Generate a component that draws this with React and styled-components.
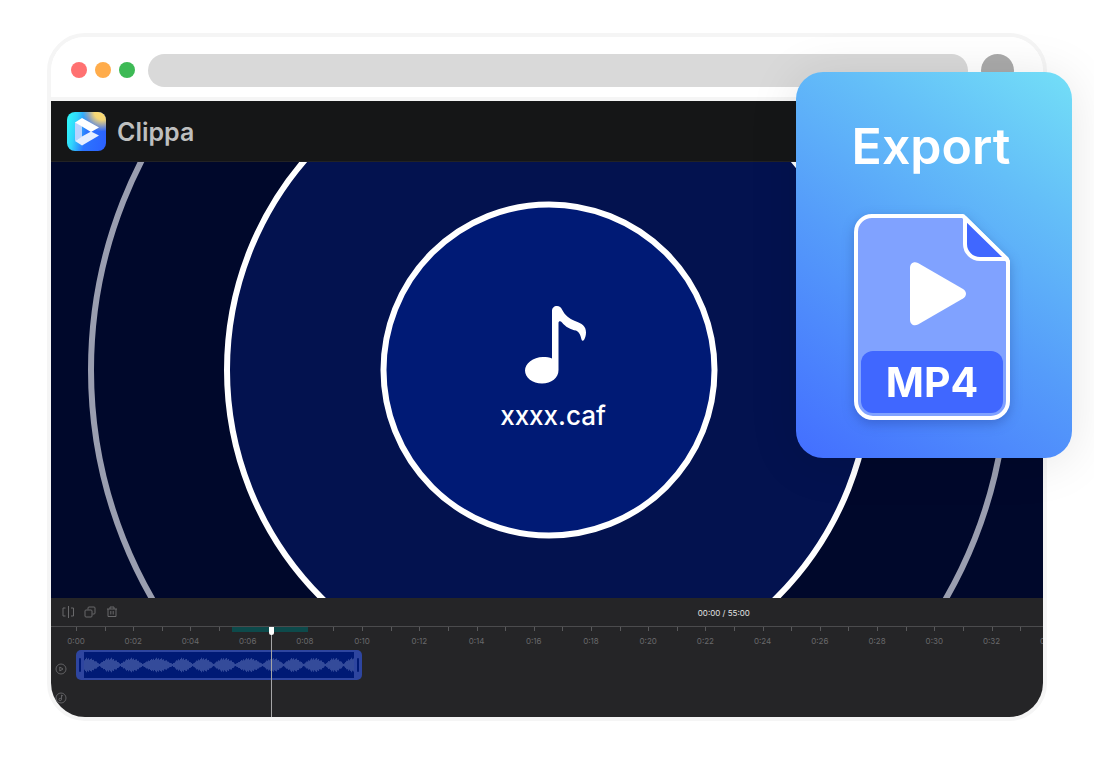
import React from 'react';
import styled, { createGlobalStyle } from 'styled-components';

const VISIBLE_SECONDS = 33.8;
const GUTTER = 25;

const GlobalStyle = createGlobalStyle`
  *, *::before, *::after {
    box-sizing: border-box;
  }
  body {
    margin: 0;
    background: #fff;
    font-family: Inter, "Open Sans", sans-serif;
  }
  button, input {
    margin: 0;
    padding: 0;
    border: 0;
    background: none;
    font: inherit;
    color: inherit;
  }
  svg {
    display: block;
  }
`;

const Page = styled.main`
  position: relative;
  padding: 33px 47px 43px;
`;

const Window = styled.section`
  overflow: hidden;
  border: 4px solid #f5f5f5;
  border-radius: 38px;
  background: #fff;
`;

const TitleBar = styled.header`
  display: flex;
  align-items: center;
  gap: 13px;
  height: 64px;
  padding: 6px 29px 0 20px;
  border-bottom: 4px solid #f5f5f5;
  background: #fff;
`;
const Lights = styled.div`
  display: flex;
  gap: 8px;
`;
const Light = styled.button`
  width: 16px;
  height: 16px;
  border-radius: 50%;
  background: ${({color}) => color};
`;
const Address = styled.input`
  flex: 1;
  min-width: 0;
  height: 33px;
  padding: 0 16px;
  border-radius: 17px;
  background: #d9d9d9;
`;
const Avatar = styled.button`
  width: 33px;
  height: 33px;
  border-radius: 50%;
  background: #aaa;
`;

const AppBar = styled.div`
  display: flex;
  align-items: center;
  gap: 11px;
  height: 61px;
  padding: 1px 16px 0;
  border-bottom: 1px solid #222224;
  background: #151617;
`;
const AppName = styled.h1`
  margin: 0;
  font-size: 25px;
  line-height: 32px;
  font-weight: 600;
  color: #bebfbf;
`;

const Stage = styled.div`
  display: grid;
  height: 436px;
  overflow: hidden;
  background: #00082b;

  > * {
    grid-area: 1 / 1;
  }
`;
const Rings = styled.svg`
  width: 100%;
  height: 436px;
`;
const Track = styled.div`
  display: flex;
  flex-direction: column;
  align-items: center;
  gap: 16px;
  padding: 144px 0 0 18px;
`;
const TrackName = styled.p`
  margin: 0;
  padding-right: 6px;
  font-size: 26px;
  line-height: 32px;
  font-weight: 500;
  color: #fff;
`;

const Timeline = styled.div`
  background: #252527;
  color: #69696b;
`;
const Tools = styled.div`
  display: grid;
  grid-template-columns: 13fr 7fr;
  align-items: center;
  height: 28px;
`;
const ToolGroup = styled.div`
  display: flex;
  gap: 10px;
  padding-left: 11px;
`;
const ToolButton = styled.button`
  width: 12px;
  height: 12px;
`;
const Clock = styled.span`
  padding: 2px 0 0 2px;
  font-size: 8px;
  line-height: 12px;
  color: #e2e2e3;
`;

const Lanes = styled.div`
  display: grid;
  grid-template-columns: ${GUTTER}px 1fr;
  height: 91px;
  border-top: 1px solid #4b4b4d;
`;
const Gutter = styled.div`
  display: flex;
  flex-direction: column;
  gap: 17px;
  padding: 36px 0 0 4px;
`;
const Area = styled.div`
  position: relative;
  min-width: 0;
`;
const Ruler = styled.ol`
  display: flex;
  height: 23px;
  margin: 0;
  padding: 0;
  list-style: none;
`;
const Second = styled.li`
  flex: none;
  width: calc(100% / ${VISIBLE_SECONDS});

  &::before {
    content: '';
    display: block;
    width: 1px;
    height: 4px;
    background: #59595b;
  }
`;
const SecondLabel = styled.span`
  display: flex;
  justify-content: center;
  width: 0;
  margin-top: 4px;
  font-size: 8px;
  line-height: 12px;
`;
const Range = styled.div`
  position: absolute;
  top: 0;
  height: 5px;
  background: #0d4a4b;
`;
const Clip = styled.div`
  display: grid;
  grid-template-columns: 8px 1fr 8px;
  align-items: center;
  height: 30px;
  border-radius: 5px;
  background: #2e459f;
`;
const Grip = styled.button`
  justify-self: center;
  width: 2px;
  height: 14px;
  border-radius: 1px;
  background: #001a75;
`;
const Wave = styled.svg`
  width: 100%;
  height: 26px;
  background: #001a75;
`;
const Playhead = styled.div`
  position: absolute;
  top: 0;
  width: 5px;
  height: 90px;
  margin-left: -2px;
  background: linear-gradient(#a5a5a6, #a5a5a6) center / 1px 100% no-repeat;

  &::before {
    content: '';
    display: block;
    height: 8px;
    border-radius: 0 0 3px 3px;
    background: #fff;
  }
`;

const ExportCard = styled.aside`
  position: absolute;
  top: 72px;
  right: 22px;
  display: flex;
  flex-direction: column;
  align-items: center;
  gap: 36px;
  width: 276px;
  height: 386px;
  padding: 42px 4px 0 0;
  border-radius: 27px;
  background: linear-gradient(34deg, #436eff 0%, #559cfa 44%, #64bff8 74%, #73dff7 100%);
  box-shadow: 0 4px 50px rgba(0, 0, 0, 0.1);
`;
const ExportTitle = styled.h2`
  margin: 0;
  padding-right: 2px;
  font-size: 50px;
  line-height: 64px;
  font-weight: 600;
  color: #fff;
`;
const File = styled.div`
  display: grid;
  filter: drop-shadow(0 4px 6px rgba(20, 40, 120, 0.3));

  > * {
    grid-area: 1 / 1;
  }
`;
const Format = styled.span`
  align-self: end;
  margin: 0 7px 7px;
  border-radius: 12px;
  background: #4067ff;
  font-size: 41px;
  line-height: 62px;
  font-weight: 700;
  text-align: center;
  color: #fff;
`;

function Logo() {
  return (
    <svg width="39" height="39" viewBox="0 0 39 39" aria-hidden="true">
      <defs>
        <linearGradient id="logoBase" x1="0" y1="0.4" x2="1" y2="0.6">
          <stop offset="0" stopColor="#2ff3fb"/>
          <stop offset="0.2" stopColor="#31d5fc"/>
          <stop offset="0.5" stopColor="#2c74ff"/>
          <stop offset="1" stopColor="#2b62ff"/>
        </linearGradient>
        <radialGradient id="logoSun" cx="0.9" cy="0" r="0.5">
          <stop offset="0" stopColor="#ffdc70"/>
          <stop offset="0.4" stopColor="#ffdc70" stopOpacity="0.95"/>
          <stop offset="1" stopColor="#ffdc70" stopOpacity="0"/>
        </radialGradient>
      </defs>
      <rect width="39" height="39" rx="8" fill="url(#logoBase)"/>
      <rect width="39" height="39" rx="8" fill="url(#logoSun)"/>
      <path d="M8 10 15 14V25L8 29Z" fill="#b9d3ff"/>
      <path d="M8 10.500 15 6 32 15.500 24 20 15 14.500Z" fill="#fff"/>
      <path d="M24 19.500 32 23.500 15 33.500 8 29 15 24.500Z" fill="#e6eeff"/>
    </svg>
  );
}

function NoteGlyph() {
  return (
    <svg width="62" height="78" viewBox="0 0 62 78" aria-hidden="true">
      <path
        d="M27 5C27 2 29 0 32 0c2.500 0 4 1.500 5 3.500 3 6 7 9 13 11.500 7 2.500 11 5 11 11.500 0 3-1 6-2 7.500-1 1-2 1-2.500-.5-1-4-2-7.500-5.500-9-5-.5-11-4-14-8-1.500-2-3.500-1.500-3.500.5V64c0 8-7 13.500-16.500 13.500C7.500 77.500 0 71.500 0 64.500S8 51 18 51c3.500 0 6.500.3 9 1.500Z"
        fill="#fff"
      />
    </svg>
  );
}

// pixel columns where the sound is at its quietest
const NODES = [0, 15, 36, 58, 88, 108, 129, 151, 178, 199, 219, 241, 259, 276];

// half-height of the sound wave in one pixel column
function waveAt(x) {
  const i = NODES.findIndex((n) => n > x);
  const from = NODES[i - 1];
  const t = i === 1 ? 0.35 + (x / NODES[1]) * 0.65 : (x - from) / (NODES[i] - from);
  const swell = Math.sin(Math.PI * t);
  const jitter = ((x * 7) % 5) / 2 - 0.5;
  return 1 + swell * 4.8 + swell * jitter;
}

function WaveForm() {
  const columns = Array.from({length: 270}, (_, x) => x);
  return (
    <Wave viewBox="0 0 270 26" preserveAspectRatio="none" aria-hidden="true">
      <path
        d={columns.map((x) => `M${x} ${13 - waveAt(x)}h1v${2 * waveAt(x)}h-1z`).join('')}
        fill="#344b9a"
      />
    </Wave>
  );
}

function SplitIcon() {
  return (
    <svg width="12" height="12" viewBox="0 0 12 12" fill="none" stroke="currentColor">
      <path d="M3.500 2H1v8h2.500M9 2h2.500v8H9M6.500 0v12"/>
    </svg>
  );
}

function CopyIcon() {
  return (
    <svg width="12" height="12" viewBox="0 0 12 12" fill="none" stroke="currentColor">
      <rect x="1" y="4" width="7" height="7" rx="1"/>
      <path d="M4 3.500V2a1 1 0 0 1 1-1h5a1 1 0 0 1 1 1v5a1 1 0 0 1-1 1H8.500"/>
    </svg>
  );
}

function TrashIcon() {
  return (
    <svg width="12" height="12" viewBox="0 0 12 12" fill="none" stroke="currentColor">
      <path d="M1 3h10M4 3V1h4v2M2 3v7.500h8V3M4.800 5v3.500M7.200 5v3.500"/>
    </svg>
  );
}

function LaneIcon({children}) {
  return (
    <svg width="12" height="12" viewBox="0 0 12 12" fill="none" stroke="currentColor" strokeWidth="0.9" aria-hidden="true">
      <circle cx="6" cy="6" r="5"/>
      {children}
    </svg>
  );
}

function FileShape() {
  return (
    <svg width="156" height="206" viewBox="0 0 156 206" strokeLinejoin="round" aria-hidden="true">
      <path d="M18 2h91l45 45v140a17 17 0 0 1-17 17H19a17 17 0 0 1-17-17V18A16 16 0 0 1 18 2Z" fill="#80a2ff" stroke="#fff" strokeWidth="4"/>
      <path d="M111 4v26a15 15 0 0 0 15 15h27Z" fill="#4067ff" stroke="#fff" strokeWidth="4"/>
      <path d="M56 54c0-5 4-7 8-5l45 26c4 2.500 4 7 0 9.500l-45 26c-4 2-8 0-8-5Z" fill="#fff"/>
    </svg>
  );
}

function secondsToWidth(seconds) {
  return `${(seconds / VISIBLE_SECONDS) * 100}%`;
}

function formatSecond(second) {
  return `0:${String(second).padStart(2, '0')}`;
}

function App() {
  const seconds = Array.from({length: 35}, (_, i) => i);

  return (
    <Page>
      <GlobalStyle/>
      <Window>
        <TitleBar>
          <Lights>
            <Light color="#ff7171" aria-label="Close"/>
            <Light color="#ffac4b" aria-label="Minimize"/>
            <Light color="#3dba55" aria-label="Maximize"/>
          </Lights>
          <Address type="text" aria-label="Address"/>
          <Avatar aria-label="Account"/>
        </TitleBar>
        <AppBar>
          <Logo/>
          <AppName>Clippa</AppName>
        </AppBar>
        <Stage>
          <Rings viewBox="0 0 992 436" preserveAspectRatio="xMidYMid slice" aria-hidden="true">
            <circle cx="498" cy="208" r="458" fill="none" stroke="#9a9eb0" strokeWidth="6"/>
            <circle cx="498" cy="208" r="322" fill="#03124f" stroke="#fff" strokeWidth="6"/>
            <circle cx="498" cy="208" r="165.500" fill="#001a75" stroke="#fff" strokeWidth="6"/>
          </Rings>
          <Track>
            <NoteGlyph/>
            <TrackName>xxxx.caf</TrackName>
          </Track>
        </Stage>
        <Timeline>
          <Tools>
            <ToolGroup>
              <ToolButton aria-label="Split"><SplitIcon/></ToolButton>
              <ToolButton aria-label="Duplicate"><CopyIcon/></ToolButton>
              <ToolButton aria-label="Delete"><TrashIcon/></ToolButton>
            </ToolGroup>
            <Clock>00:00 / 55:00</Clock>
          </Tools>
          <Lanes>
            <Gutter>
              <LaneIcon><path d="M4.800 4v4L8 6Z"/></LaneIcon>
              <LaneIcon><path d="M6.500 7.500V3l1.500 1"/><circle cx="5.200" cy="7.500" r="1.200"/></LaneIcon>
            </Gutter>
            <Area>
              <Range style={{left: secondsToWidth(5.45), width: secondsToWidth(2.66)}}/>
              <Ruler>
                {seconds.map((second) => (
                  <Second key={second}>
                    {second % 2 === 0 && <SecondLabel>{formatSecond(second)}</SecondLabel>}
                  </Second>
                ))}
              </Ruler>
              <Clip style={{width: secondsToWidth(10)}}>
                <Grip aria-label="Trim start"/>
                <WaveForm/>
                <Grip aria-label="Trim end"/>
              </Clip>
              <Playhead style={{left: secondsToWidth(6.82)}}/>
            </Area>
          </Lanes>
        </Timeline>
      </Window>
      <ExportCard>
        <ExportTitle>Export</ExportTitle>
        <File>
          <FileShape/>
          <Format>MP4</Format>
        </File>
      </ExportCard>
    </Page>
  );
}

export default App;
